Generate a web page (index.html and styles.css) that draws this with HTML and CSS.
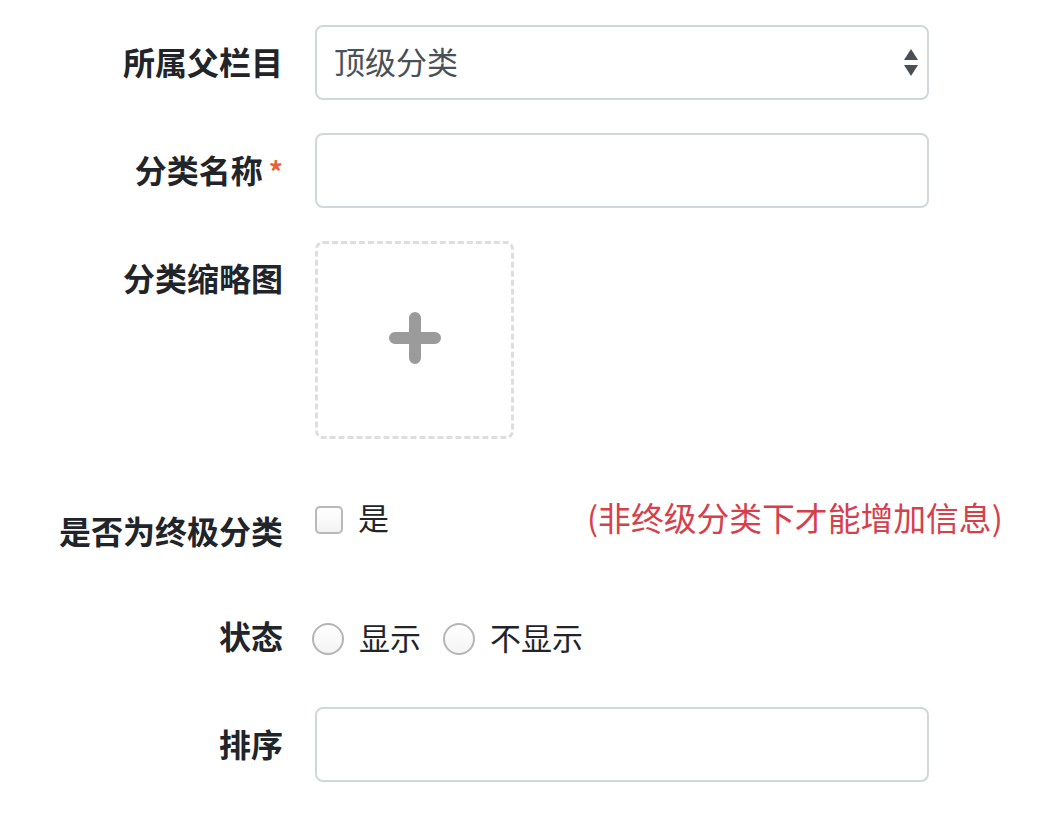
FILE: index.html
```html
<!DOCTYPE html>
<html lang="zh-CN">
<head>
    <meta charset="UTF-8">
    <title>分类编辑</title>
    <link rel="stylesheet" href="styles.css">
</head>
<body>
    <form class="form">
        <div class="row row-parent">
            <label class="row-label">所属父栏目</label>
            <div class="select-box">
                <span class="select-text">顶级分类</span>
                <svg class="select-arrows" width="16" height="30" viewBox="0 0 16 30">
                    <path d="M8 1 L15 12 L1 12 Z" fill="#4a4f55"/>
                    <path d="M1 17 L15 17 L8 28 Z" fill="#4a4f55"/>
                </svg>
            </div>
        </div>

        <div class="row row-name">
            <label class="row-label">分类名称<span class="required">*</span></label>
            <input class="text-input" type="text">
        </div>

        <div class="row row-thumb">
            <label class="row-label">分类缩略图</label>
            <div class="upload">
                <svg width="52" height="52" viewBox="0 0 52 52">
                    <path d="M26 6 V46 M6 26 H46" stroke="#9b9b9b" stroke-width="12" stroke-linecap="round"/>
                </svg>
            </div>
        </div>

        <div class="row row-final">
            <label class="row-label">是否为终极分类</label>
            <div class="choice-line">
                <span class="check"></span>
                <span class="choice-text">是</span>
                <span class="hint">(非终级分类下才能增加信息)</span>
            </div>
        </div>

        <div class="row row-status">
            <label class="row-label">状态</label>
            <div class="choice-line">
                <span class="radio"></span>
                <span class="choice-text">显示</span>
                <span class="radio radio-second"></span>
                <span class="choice-text">不显示</span>
            </div>
        </div>

        <div class="row row-sort">
            <label class="row-label">排序</label>
            <input class="text-input" type="text">
        </div>
    </form>
</body>
</html>
```

FILE: styles.css
```css
body {
    margin: 0;
    background: #fff;
    font-family: "Noto Sans CJK SC", "Noto Sans", sans-serif;
    color: #212529;
}
.form {
    padding-top: 25px;
    padding-left: 8px;
}
.row {
    display: grid;
    grid-template-columns: 275px 614px;
    column-gap: 32px;
    align-items: start;
}
.row-label {
    font-size: 32px;
    font-weight: bold;
    line-height: 48px;
    padding-top: 12px;
    text-align: right;
    white-space: nowrap;
    color: #212529;
}
.required {
    color: #e8603c;
    margin-left: 6px;
    font-size: 28px;
}
.select-box, .text-input {
    box-sizing: border-box;
    height: 75px;
    border: 2px solid #d3d6da;
    border-radius: 8px;
    background: #fff;
}
.select-box {
    display: flex;
    align-items: center;
    justify-content: space-between;
    padding: 0 8px 0 17px;
}
.select-text {
    font-size: 31px;
    color: #495057;
    margin-bottom: 5px;
}
.text-input {
    width: 614px;
    font: inherit;
    outline: none;
}
.row-name { margin-top: 33px; }
.row-thumb { margin-top: 33px; }
.upload {
    box-sizing: border-box;
    width: 199px;
    height: 198px;
    padding-bottom: 5px;
    border: 3px dashed #dedede;
    border-radius: 8px;
    display: flex;
    align-items: center;
    justify-content: center;
}
.row-final { margin-top: 55px; }
.row-status { margin-top: 45px; }
.row-sort { margin-top: 45px; }
.choice-line {
    display: flex;
    align-items: center;
    height: 48px;
    white-space: nowrap;
}
.row-final .choice-line { padding-top: 0; }
.row-status .choice-line { padding-top: 15px; }
.choice-text {
    flex: none;
    font-size: 31px;
    color: #212529;
    margin-left: 15px;
    margin-bottom: 3px;
}
.check {
    flex: none;
    box-sizing: border-box;
    width: 28px;
    height: 28px;
    margin-top: 4px;
    border: 2px solid #b9b9b9;
    border-radius: 5px;
    background: linear-gradient(#fff, #f3f3f3);
}
.hint {
    flex: none;
    font-size: 32.8px;
    color: #d5404b;
    margin-left: 198px;
    margin-top: -4px;
}
.radio {
    flex: none;
    box-sizing: border-box;
    width: 32px;
    height: 32px;
    margin-left: -3px;
    margin-top: 2px;
    border: 2px solid #b5b5b5;
    border-radius: 50%;
    background: linear-gradient(#fff, #f4f4f4);
}
.radio-second {
    margin-left: 22px;
}
```
